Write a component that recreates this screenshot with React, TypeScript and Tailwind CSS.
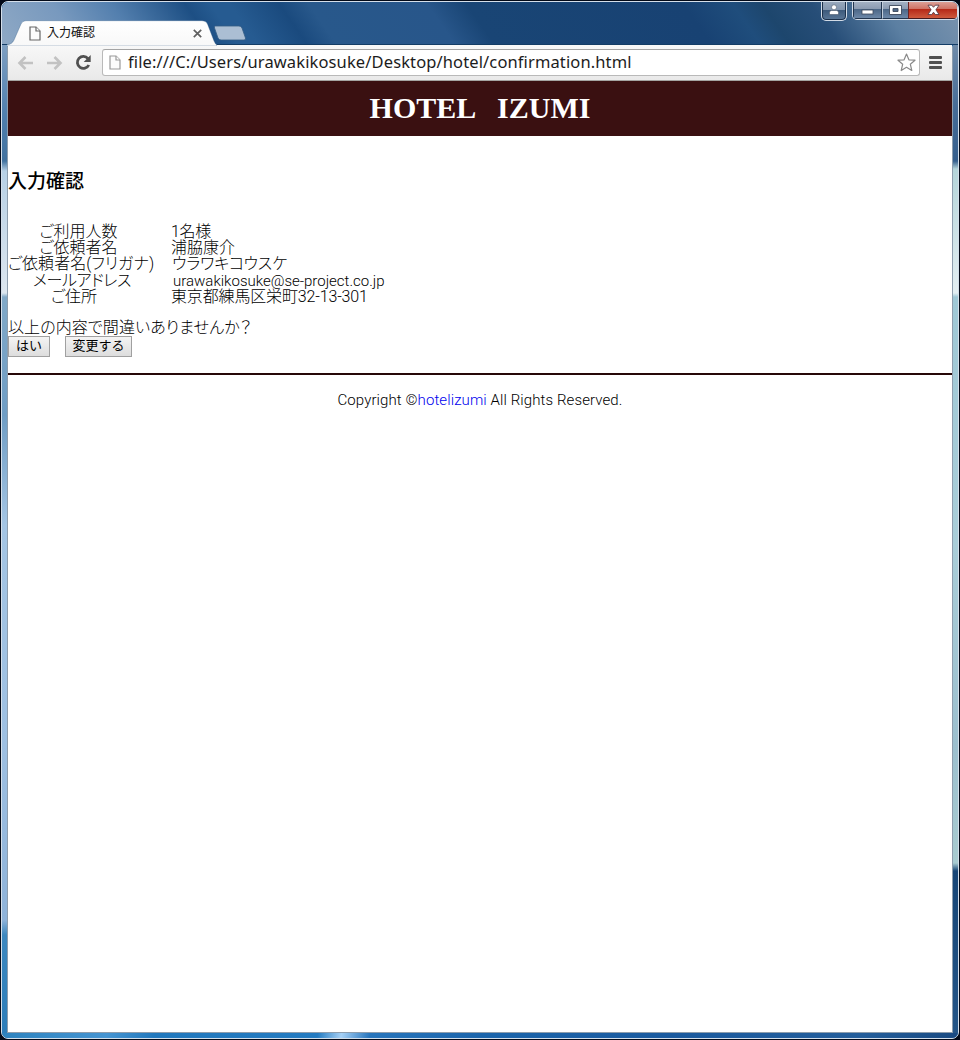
import React from "react";

const jp = "font-['Roboto','Noto_Sans_CJK_JP',sans-serif]";

type Row = { label: string; value: string; labelClass: string; valueClass: string };

const rows: Row[] = [
  { label: "ご利用人数", value: "1名様", labelClass: "pr-[7px]", valueClass: "tracking-[-0.3px]" },
  { label: "ご依頼者名", value: "浦脇康介", labelClass: "pr-[7px]", valueClass: "" },
  { label: "ご依頼者名(フリガナ)", value: "ウラワキコウスケ", labelClass: "pr-[2px] tracking-[0.1px]", valueClass: "pl-px tracking-[-0.1px]" },
  { label: "メールアドレス", value: "urawakikosuke@se-project.co.jp", labelClass: "tracking-[-0.4px]", valueClass: "pl-[2px] text-[15px] tracking-[0px]" },
  { label: "ご住所", value: "東京都練馬区栄町32-13-301", labelClass: "pr-[16px]", valueClass: "tracking-[-0.15px]" },
];

function PageIcon({ stroke }: { stroke: string }) {
  return (
    <svg width="12" height="15" viewBox="0 0 12 15" fill="#fcfcfc" stroke={stroke} strokeWidth="1.2" className="shrink-0">
      <path d="M1 1h6l4 4v9H1z" />
      <path d="M7 1v4h4" />
    </svg>
  );
}

function TitleBar() {
  return (
    <div className="relative h-[43px] rounded-t-[6px] bg-[linear-gradient(55deg,#8fa9c5_0%,#7899be_8%,#537fae_14%,#1d4f84_21.5%,#265b91_24%,#265b91_26%,#1a4a7e_31%,#28588b_34%,#28568a_46%,#194575_50%,#184273_72%,#1f4d7c_77%,#1d466d_80%,#274e78_85%,#5b7fa2_92%,#7b94af_100%)] shadow-[inset_0_-1px_0_#143d66]">
      <div className="flex items-start">
        <div className="relative mt-[18px] ml-[5px] h-[26px] w-[210px]">
          <svg className="absolute inset-0" width="210" height="26" viewBox="0 0 210 26">
            <defs>
              <linearGradient id="tab" x1="0" y1="0" x2="0" y2="1">
                <stop offset="0" stopColor="#ffffff" />
                <stop offset="1" stopColor="#f8f8f8" />
              </linearGradient>
            </defs>
            <path d="M0 26V24.5Q5 24.5 7 20L14 4Q15.500 .7 19 .7H195Q199 .7 200.500 4L207 21Q208.500 24.500 210 25V26Z" fill="url(#tab)" stroke="#335d86" strokeOpacity=".45" strokeWidth=".8" />
          </svg>
          <div className="relative flex h-[26px] items-center pl-[22px]">
            <PageIcon stroke="#666666" />
            <span className={`ml-[6px] text-[12px] leading-[14px] text-[#111] ${jp}`}>入力確認</span>
            <svg className="ml-[98px]" width="9" height="9" viewBox="0 0 9 9" stroke="#606060" strokeWidth="1.7">
              <path d="M.8.8l7.400 7.400M8.200.8L.8 8.200" />
            </svg>
          </div>
        </div>
        <svg className="mt-[23px] -ml-[4px]" width="34" height="16" viewBox="0 0 34 16">
          <path d="M2.500 1H26Q28 1 29 3L32.500 13Q33 15 31 15H8Q6 15 5 13L1.500 3Q1 1 2.500 1Z" fill="#abbed3" stroke="#335c84" strokeWidth=".8" />
        </svg>
      </div>
      <div className="absolute -top-px right-0 flex items-start gap-[5px]">
        <div className="flex h-[20px] w-[26px] justify-center rounded-b-[5px] border border-t-0 border-[#d3dce7] bg-[linear-gradient(#9aaabd,#8396ae_46%,#3c597a_48%,#5b7898)] pt-[3px] shadow-[inset_0_0_0_1px_#1b304a]">
          <svg width="10" height="12" viewBox="0 0 10 12" fill="#fff" stroke="#38475b" strokeWidth=".5">
            <circle cx="5" cy="3.300" r="2.500" />
            <path d="M.5 10.500V8.500Q.5 6.500 2.500 6.500H7.500Q9.500 6.500 9.500 8.500V10.500Z" />
          </svg>
        </div>
        <div className="flex h-[19px] w-[106px] overflow-hidden rounded-b-[5px] border border-t-0 border-[#d3dce7]">
          <div className="flex w-[29px] items-center justify-center border border-t-0 border-[#23364f] bg-[linear-gradient(#a7b4c6,#8b9bb1_46%,#4b6686_48%,#6d88a8)]">
            <svg width="13" height="18" viewBox="0 0 13 18"><rect x="1" y="9" width="11" height="4" fill="#fff" stroke="#3d485b" strokeWidth=".8" /></svg>
          </div>
          <div className="flex w-[26px] items-center justify-center border-b border-l border-[#23364f] border-l-[#c3cedb] bg-[linear-gradient(#a7b4c6,#8b9bb1_46%,#4b6686_48%,#6d88a8)]">
            <svg width="13" height="12" viewBox="0 0 13 12"><path d="M.5 1.500H12.500V10.500H.5ZM4 4.500V7.500H9V4.500Z" fill="#fff" fillRule="evenodd" stroke="#3d485b" strokeWidth=".9" /></svg>
          </div>
          <div className="flex flex-1 items-center justify-center border-b border-l border-[#451b20] border-l-[#6d2423] bg-[linear-gradient(#dda69d,#cf7265_46%,#b52817_48%,#ce5a3d)]">
            <svg width="13" height="12" viewBox="0 0 13 12"><path d="M1 1.200H4.700L6.500 3.300 8.300 1.200H12L8.900 5.800 12 10.500H8.300L6.500 8.200 4.700 10.500H1L4.100 5.800Z" fill="#fff" stroke="#4b3441" strokeWidth=".8" /></svg>
          </div>
        </div>
      </div>
    </div>
  );
}

function Toolbar() {
  return (
    <div className="flex h-[36px] items-center border-b border-[#a5a5a2] bg-linear-to-b from-[#f8f8f8] to-[#e9e9e9] pl-[9px]">
      <svg width="17" height="14" viewBox="0 0 17 14" fill="none" stroke="#c2c2c2" strokeWidth="2.600">
        <path d="M16 7H3M8.500 1L2.500 7l6 6" />
      </svg>
      <svg className="ml-[12px]" width="17" height="14" viewBox="0 0 17 14" fill="none" stroke="#c2c2c2" strokeWidth="2.600">
        <path d="M1 7H14M8.500 1L14.500 7l-6 6" />
      </svg>
      <svg className="ml-[12px]" width="17" height="17" viewBox="0 0 17 17">
        <path d="M13 4.600A6 6 0 1 0 13.800 11" fill="none" stroke="#505050" strokeWidth="2.800" />
        <path d="M15.700 1V8H8.700Z" fill="#505050" />
      </svg>
      <div className="ml-[10px] flex h-[27px] w-[818px] items-center rounded-[3px] border border-[#b9b9b9] border-t-[#a4a4a4] bg-white pl-[6px]">
        <PageIcon stroke="#999999" />
        <span className="ml-[7px] pb-[2px] font-['Noto_Sans',sans-serif] text-[16.5px] leading-[20px] tracking-[0.12px] whitespace-nowrap text-[#1c1c1c]">
          file:///C:/Users/urawakikosuke/Desktop/hotel/confirmation.html
        </span>
        <svg className="mr-[3px] ml-auto" width="19" height="19" viewBox="0 0 19 19" fill="#fff" stroke="#8a8a8a" strokeWidth="1.200" strokeLinejoin="round">
          <path d="M9.500 1L11.900 6.800 18 7.200 13.300 11.200 14.800 17.500 9.500 14.300 4.200 17.500 5.700 11.200 1 7.200 7.100 6.800Z" />
        </svg>
      </div>
      <div className="ml-[9px] flex flex-col gap-[2px]">
        <div className="h-[3px] w-[13px] rounded-[1px] bg-[#505050]" />
        <div className="h-[3px] w-[13px] rounded-[1px] bg-[#505050]" />
        <div className="h-[3px] w-[13px] rounded-[1px] bg-[#505050]" />
      </div>
    </div>
  );
}

const buttonClass = "h-[21px] border border-[#a0a0a0] bg-linear-to-b from-[#f4f4f4] to-[#dddddd] text-[13px] leading-[18px] font-normal whitespace-nowrap text-black";

function Page() {
  return (
    <div className={`flex-1 bg-white text-[16px] leading-[16px] font-light text-black ${jp}`}>
      <h1 className="h-[55px] bg-[#3a1011] text-center font-['Liberation_Serif',serif] text-[30px] leading-[54px] font-bold whitespace-pre text-white">
        {"HOTEL   IZUMI"}
      </h1>
      <h2 className="mt-[35px] h-[22px] text-[19px] leading-[22px] font-medium">入力確認</h2>
      <div className="mt-[31px] flex flex-col">
        {rows.map((row) => (
          <div key={row.label} className="flex h-[16.2px] whitespace-nowrap [font-feature-settings:'palt']">
            <div className={`flex w-[148px] justify-center ${row.labelClass}`}>{row.label}</div>
            <div className={`ml-[15px] ${row.valueClass}`}>{row.value}</div>
          </div>
        ))}
      </div>
      <p className="mt-[15px] h-[16px] tracking-[0.1px] [font-feature-settings:'palt']">以上の内容で間違いありませんか？</p>
      <div className="flex gap-[15px]">
        <button className={`w-[42px] ${buttonClass}`}>はい</button>
        <button className={`w-[67px] ${buttonClass}`}>変更する</button>
      </div>
      <hr className="mt-[16px] h-[2px] border-0 bg-[#260808]" />
      <p className="mt-[17px] text-center text-[15px] tracking-[0.1px]">
        Copyright ©<a className="text-[#0000ee]">hotelizumi</a> All Rights Reserved.
      </p>
    </div>
  );
}

export default function App() {
  return (
    <div className="h-[1040px] w-[960px] overflow-hidden bg-[#030a18] p-px">
      <div className="flex h-full flex-col overflow-hidden rounded-[7px] border border-[#d5dfea] bg-[#2569a8]">
        <TitleBar />
        <div className="flex min-h-0 flex-1">
          <div className="w-[5px] bg-[linear-gradient(#7e9fc2_0px,#507fae_70px,#42729f_116px,#b7d0e5_126px,#dce6ef_248px,#81a9c8_252px,#6f9dc4_370px,#a4c5e4_480px,#9ec0e2_700px,#8fb3d9_875px,#3d88bf_890px,#2c7db9_988px)]" />
          <div className="flex w-[946px] flex-col rounded-t-[3px] border-x border-b border-[#8d9dad] bg-[#f7f7f7]">
            <Toolbar />
            <Page />
          </div>
          <div className="w-[5px] bg-[linear-gradient(#6f8baa_0px,#476d98_60px,#355f8d_116px,#b4d4d9_124px,#e3eef2_248px,#9fc8d6_252px,#a9cdd8_500px,#9cbfce_700px,#a8cbd0_818px,#174677_826px,#245587_988px)]" />
        </div>
        <div className="h-[5px] bg-[linear-gradient(100deg,#2d83bf_0%,#4695d2_11%,#2178bd_16%,#247bc1_33%,#a5d0f5_35.500%,#2775bc_38.500%,#1b65ac_50%,#1a5a9f_70%,#245e9b_90%,#194a82_100%)]" />
      </div>
    </div>
  );
}
